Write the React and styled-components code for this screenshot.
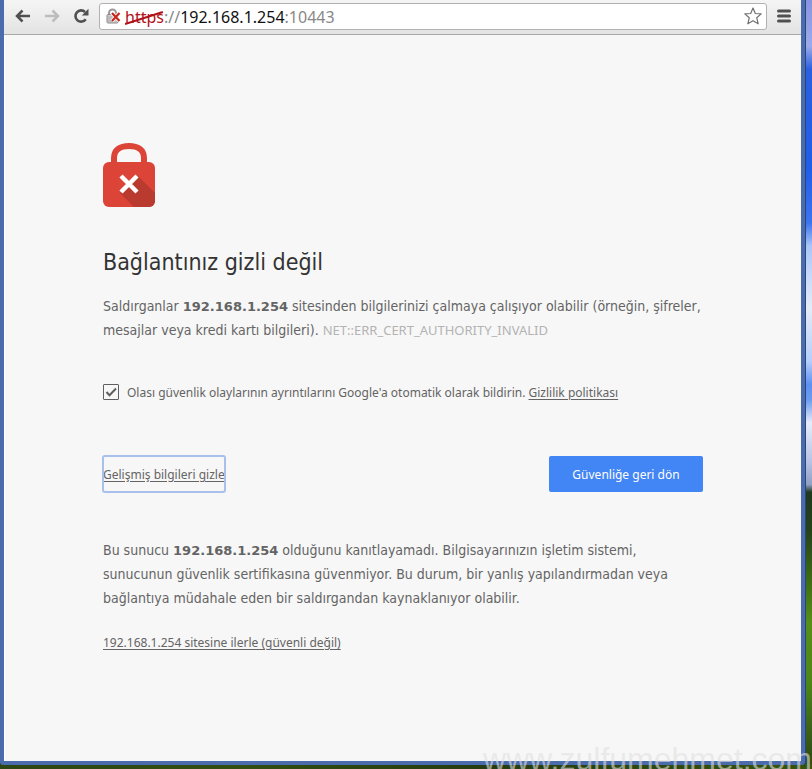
import React, { useState } from 'react';
import styled, { createGlobalStyle } from 'styled-components';

const uiFont = '"Noto Sans", "Open Sans", sans-serif';
const textFont = '"DejaVu Sans Condensed", "Noto Sans", sans-serif';

const GlobalStyle = createGlobalStyle`
  *, *::before, *::after { box-sizing: border-box; }
  body { margin: 0; }
`;

const Desktop = styled.div`
  position: relative;
  display: flex;
  min-height: 100vh;
  padding: 0 7px 4px 0;
  overflow: hidden;
  background:
    linear-gradient(90deg, #2c4613, #304e12 30%, #243b10 60%, #35540f) bottom / 100% 5px no-repeat,
    linear-gradient(
      180deg,
      #8794e0 0%, #9aabea 6%, #2a5fe0 9%, #1f5ee8 22%, #3c74ee 29%,
      #a9c6f8 32%, #c7dafa 36%, #e4ecf6 40%, #b4cffa 47%, #5c90f2 50%,
      #6b9cf0 52%, #e6ecfa 55%, #b6c3e4 60%, #8fa0c4 63%, #1e3a22 64%,
      #24431c 69%, #3f7015 76%, #55901c 81%, #4b8618 89%, #3f6d1a 93%, #2c4613 100%
    );
`;

const BrowserWindow = styled.div`
  display: flex;
  flex: 1;
  flex-direction: column;
  min-width: 0;
  border: solid #4a6cad;
  border-width: 0 4px 4px;
  border-radius: 0 0 4px 4px;
  box-shadow: inset 1px 0 #fff, 1px 0 #2d4478;
  background: #f7f7f7;
`;

const Toolbar = styled.header`
  display: flex;
  align-items: center;
  gap: 10px;
  height: 35px;
  padding: 0 10px 2px 11px;
  border-bottom: 1px solid #a9a9a9;
  background: linear-gradient(#f5f5f5, #e3e3e3);
`;

const NavButtons = styled.nav`
  display: flex;
  gap: 13px;
`;

const IconButton = styled.button`
  display: grid;
  place-items: center;
  flex: none;
  padding: 0;
  border: 0;
  background: none;
  color: ${({ disabled }) => (disabled ? '#bdbdbd' : '#505050')};
`;

const AddressBar = styled.div`
  display: flex;
  flex: 1;
  align-items: center;
  min-width: 0;
  height: 27px;
  padding: 0 4px 0 6px;
  border: 1px solid #b1b1b1;
  border-radius: 3px;
  background: #fff;
`;

const Url = styled.div`
  flex: 1;
  margin-left: 4px;
  padding-top: 1px;
  overflow: hidden;
  color: #888;
  font: 16px/24px ${uiFont};
  white-space: nowrap;
  outline: 0;
`;

const Scheme = styled.span`
  position: relative;
  color: #b0121a;
`;

const Strike = styled.svg`
  position: absolute;
  left: 0;
  top: 4px;
  width: 100%;
  height: 16px;
`;

const Host = styled.span`
  color: #111;
`;

const Page = styled.main`
  flex: 1;
  padding: 108px 98px 60px 99px;
  color: #646464;
`;

const Column = styled.div`
  max-width: 600px;
`;

const LockIcon = styled.svg`
  display: block;
`;

const Title = styled.h1`
  margin: 39px 0 15px;
  color: #333;
  font: 23px/33px ${textFont};
`;

const Paragraph = styled.p`
  margin: 0;
  font: 14px/24px ${textFont};
`;

const Address = styled.strong`
  font: bold 13px/20px "DejaVu Sans", sans-serif;
`;

const ErrorCode = styled.span`
  color: #b3b3b3;
  font: 13px/20px ${uiFont};
`;

const ReportRow = styled.div`
  display: flex;
  align-items: center;
  gap: 8px;
  height: 20px;
  margin-top: 40px;
  font: 12px/20px ${uiFont};
`;

const TickBox = styled.span`
  display: grid;
  flex: none;
  width: 16px;
  height: 16px;

  > * { grid-area: 1 / 1; }
`;

const Checkbox = styled.input`
  width: 16px;
  height: 16px;
  margin: 0;
  appearance: none;
  border: 1px solid #5f5f5f;
  border-radius: 1px;
`;

const Tick = styled.svg`
  pointer-events: none;
`;

const TextLink = styled.a`
  color: #646464;
  font: 12px/20px ${uiFont};
  text-underline-offset: 2px;
`;

const ReportText = styled.span`
  padding-top: 2px;
  white-space: nowrap;
`;

const Actions = styled.div`
  display: flex;
  align-items: center;
  justify-content: space-between;
  margin: 54px 0 46px;
`;

const ActionButton = styled.button`
  height: 36px;
  padding: 2px 0 0;
  border: 0;
  border-radius: 2px;
  font: 12px/20px ${uiFont};
`;

const DetailsButton = styled(ActionButton)`
  outline: 2px solid #a8c1ec;
  outline-offset: -1px;
  background: none;
  color: #646464;
  text-decoration: underline;
  text-underline-offset: 2px;
`;

const PrimaryButton = styled(ActionButton)`
  min-width: 154px;
  background: #4285f4;
  color: #fff;
`;

const Proceed = styled.p`
  margin: 22px 0 0;
  line-height: 20px;
`;

const Watermark = styled.div`
  position: absolute;
  right: 0;
  bottom: -8px;
  color: rgba(225, 225, 225, 0.6);
  font: 32px/36px "Liberation Sans", sans-serif;
  pointer-events: none;
`;

function Arrow({ flip }) {
  return (
    <svg width="16" height="16" viewBox="0 0 16 16" fill="none" stroke="currentColor" strokeWidth="2.5">
      <path d={flip ? 'M1 8h13M8.5 2.5 14 8l-5.5 5.5' : 'M15 8H2M7.5 2.5 2 8l5.5 5.5'} />
    </svg>
  );
}

function Reload() {
  return (
    <svg width="16" height="16" viewBox="0 0 16 16">
      <path d="M12.7 11.2A5.6 5.6 0 1 1 12 4" fill="none" stroke="currentColor" strokeWidth="2.6" />
      <path d="M15.5 .8v6.7H8.8z" fill="currentColor" />
    </svg>
  );
}

function BrokenLock() {
  return (
    <svg width="15" height="16" viewBox="0 0 15 16" aria-label="Güvenli değil">
      <path d="M3 7V5a3.5 3.5 0 0 1 7 0v2" fill="none" stroke="#999" strokeWidth="2" />
      <rect x="1" y="6.5" width="11" height="8.5" rx="1" fill="#d0d0d0" stroke="#888" />
      <path d="M2 9h9M2 11h9M2 13h9" stroke="#aaa" />
      <path d="m6 5 7.5 8M13.5 5 6 13" stroke="#fff" strokeWidth="4" />
      <path d="m6 5 7.5 8M13.5 5 6 13" stroke="#c6261c" strokeWidth="2.2" />
    </svg>
  );
}

export default function App() {
  const [report, setReport] = useState(true);

  return (
    <Desktop>
      <GlobalStyle />
      <BrowserWindow>
        <Toolbar>
          <NavButtons>
            <IconButton aria-label="Geri"><Arrow /></IconButton>
            <IconButton aria-label="İleri" disabled><Arrow flip /></IconButton>
            <IconButton aria-label="Yenile"><Reload /></IconButton>
          </NavButtons>
          <AddressBar>
            <BrokenLock />
            <Url role="textbox" aria-label="Adres" tabIndex={0}>
              <Scheme>
                https
                <Strike viewBox="0 0 36 16" preserveAspectRatio="none">
                  <path d="M0 14 35 2" stroke="#b0121a" strokeWidth="2" />
                </Strike>
              </Scheme>
              ://<Host>192.168.1.254</Host>:10443
            </Url>
            <IconButton aria-label="Yer işareti ekle">
              <svg width="18" height="18" viewBox="0 0 18 18">
                <path
                  d="m9 1 2.3 5.5 5.9.4-4.5 3.8 1.5 6.1L9 13.8l-5.2 3 1.5-6.1L.8 6.900l5.900-.4z"
                  fill="#fff"
                  stroke="#707070"
                  strokeWidth="1.2"
                  strokeLinejoin="round"
                />
              </svg>
            </IconButton>
          </AddressBar>
          <IconButton aria-label="Menü">
            <svg width="14" height="14" viewBox="0 0 14 14">
              <path d="M1.5 2h11M1.5 7h11M1.5 12h11" stroke="currentColor" strokeWidth="3" strokeLinecap="round" />
            </svg>
          </IconButton>
        </Toolbar>

        <Page>
          <Column>
            <LockIcon width="52" height="64" viewBox="0 0 52 64" aria-hidden="true">
              <path d="M11 22V15C11 7 17 3 26 3s15 4 15 12v7" fill="none" stroke="#db4437" strokeWidth="6" />
              <rect y="19" width="52" height="45" rx="6" fill="#db4437" />
              <path d="M34.5 32.5 52 50v8a6 6 0 0 1-6 6H31L17 50z" fill="#b93a2f" />
              <path d="m18 33 16 16M34 33 18 49" stroke="#fff" strokeWidth="4.5" />
            </LockIcon>

            <Title>Bağlantınız gizli değil</Title>
            <Paragraph>
              Saldırganlar <Address>192.168.1.254</Address> sitesinden bilgilerinizi çalmaya çalışıyor
              olabilir (örneğin, şifreler, mesajlar veya kredi kartı bilgileri).{' '}
              <ErrorCode>NET::ERR_CERT_AUTHORITY_INVALID</ErrorCode>
            </Paragraph>

            <ReportRow>
              <TickBox>
                <Checkbox
                  id="report"
                  type="checkbox"
                  checked={report}
                  onChange={(event) => setReport(event.target.checked)}
                />
                {report && (
                  <Tick width="16" height="16" viewBox="0 0 16 16">
                    <path d="m3.5 8 3 3.2L13 4.5" fill="none" stroke="#5f5f5f" strokeWidth="2" />
                  </Tick>
                )}
              </TickBox>
              <ReportText>
                <label htmlFor="report">
                  Olası güvenlik olaylarının ayrıntılarını Google'a otomatik olarak bildirin.
                </label>{' '}
                <TextLink href="#gizlilik">Gizlilik politikası</TextLink>
              </ReportText>
            </ReportRow>

            <Actions>
              <DetailsButton>Gelişmiş bilgileri gizle</DetailsButton>
              <PrimaryButton>Güvenliğe geri dön</PrimaryButton>
            </Actions>

            <Paragraph>
              Bu sunucu <Address>192.168.1.254</Address> olduğunu kanıtlayamadı. Bilgisayarınızın
              işletim sistemi, sunucunun güvenlik sertifikasına güvenmiyor. Bu durum, bir yanlış
              yapılandırmadan veya bağlantıya müdahale eden bir saldırgandan kaynaklanıyor olabilir.
            </Paragraph>
            <Proceed>
              <TextLink href="#ilerle">192.168.1.254 sitesine ilerle (güvenli değil)</TextLink>
            </Proceed>
          </Column>
        </Page>
      </BrowserWindow>
      <Watermark>www.zulfumehmet.com</Watermark>
    </Desktop>
  );
}
